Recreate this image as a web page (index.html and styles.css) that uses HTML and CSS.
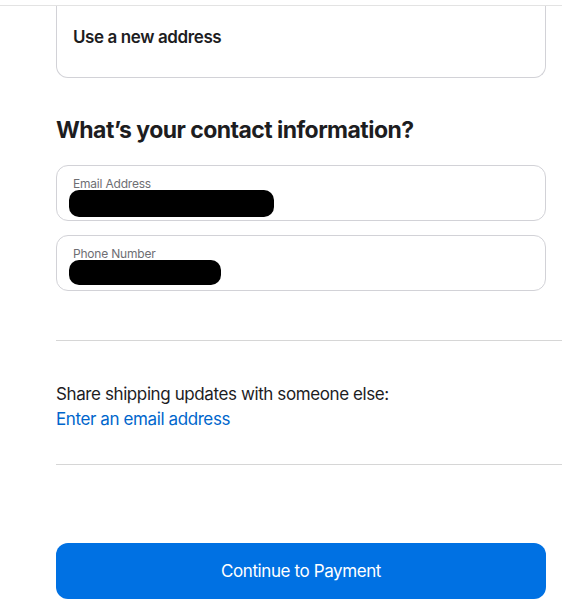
FILE: index.html
```html
<!DOCTYPE html>
<html lang="en">
  <head>
    <meta charset="UTF-8">
    <meta name="viewport" content="width=device-width, initial-scale=1.0">
    <title>Checkout - Shipping</title>
    <link rel="stylesheet" href="styles.css">
  </head>
  <body>
    <div class="top-bar"></div>
    <div class="page">
      <div class="address-card">
        <span>Use a new address</span>
      </div>

      <h2>What’s your contact information?</h2>

      <div class="field">
        <label>Email Address</label>
        <div class="redacted redacted-email"></div>
      </div>
      <div class="field">
        <label>Phone Number</label>
        <div class="redacted redacted-phone"></div>
      </div>

      <div class="share-box">
        <p>Share shipping updates with someone else:</p>
        <a href="#">Enter an email address</a>
      </div>

      <div class="button-container">
        <button>Continue to Payment</button>
      </div>
    </div>
  </body>
</html>
```

FILE: styles.css
```css
body {
  font-family: Inter, "Liberation Sans", Arial, sans-serif;
  background-color: #ffffff;
  color: #1d1d1f;
  margin: 0;
  padding: 0;
  letter-spacing: -0.4px;
}

.top-bar {
  height: 5px;
  border-bottom: 1px solid #e3e3e3;
}

.page {
  padding-left: 56px;
}

.address-card {
  margin-right: 16px;
  border: 1px solid #d2d2d7;
  border-top: none;
  border-radius: 0 0 12px 12px;
  padding: 20px 16px 29px;
  font-size: 17px;
  line-height: 22px;
  font-weight: 600;
}

h2 {
  margin: 37px 0 20px;
  font-size: 23px;
  line-height: 30px;
  font-weight: 700;
  letter-spacing: -0.55px;
}

.field {
  margin-right: 16px;
  margin-bottom: 14px;
  height: 56px;
  box-sizing: border-box;
  border: 1px solid #d2d2d7;
  border-radius: 12px;
  padding: 10px 16px 0 16px;
}

.field label {
  display: block;
  font-size: 12px;
  line-height: 15px;
  letter-spacing: -0.2px;
  color: #6e6e73;
}

.redacted {
  background-color: #000;
  border-radius: 10px;
  margin-left: -4px;
}

.redacted-email {
  width: 205px;
  height: 27px;
  margin-top: -1px;
}

.redacted-phone {
  width: 152px;
  height: 25px;
  margin-top: -1px;
}

.share-box {
  margin-top: 49px;
  border-top: 1px solid #d6d6d6;
  border-bottom: 1px solid #d6d6d6;
  padding: 41px 0 32px;
  font-size: 17px;
  line-height: 25px;
}

.share-box p {
  margin: 0;
}

.share-box a {
  color: #0066cc;
  text-decoration: none;
}

.button-container {
  margin-right: 16px;
  padding-top: 78px;
}

button {
  width: 100%;
  height: 56px;
  border: none;
  border-radius: 12px;
  background-color: #0071e3;
  color: #fff;
  font-family: inherit;
  font-size: 17px;
  letter-spacing: -0.4px;
  cursor: pointer;
}
```
